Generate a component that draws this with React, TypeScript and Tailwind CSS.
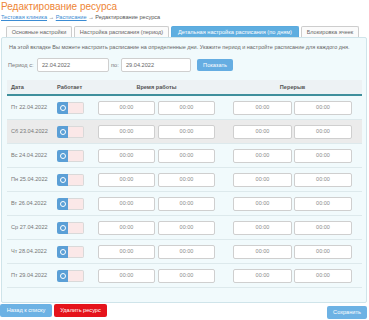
import React from "react";

const rows = [
  "Пт 22.04.2022",
  "Сб 23.04.2022",
  "Вс 24.04.2022",
  "Пн 25.04.2022",
  "Вт 26.04.2022",
  "Ср 27.04.2022",
  "Чт 28.04.2022",
  "Пт 29.04.2022",
];

function TimeInput({ w }: { w: string }) {
  return (
    <div
      className={`${w} h-[14px] bg-white border border-[#cfcfcf] rounded-[2px] flex items-center justify-center text-[5.5px] text-[#8a8a8a]`}
    >
      00:00
    </div>
  );
}

function Toggle() {
  return (
    <div className="flex h-[12px] w-[27px]">
      <div className="w-[11px] h-full bg-[#5b9fd6] rounded-l-[2px] flex items-center justify-center">
        <div className="w-[6px] h-[6px] rounded-full border border-white" />
      </div>
      <div className="flex-1 h-full bg-[#fbe8e8] border border-l-0 border-[#d9d9d9] rounded-r-[2px]" />
    </div>
  );
}

export default function App() {
  return (
    <div
      className="w-[369px] h-[320px] overflow-hidden bg-white relative"
      style={{ fontFamily: '"Liberation Sans", Arial, sans-serif' }}
    >
      <div className="pl-[1px] pt-[1px] text-[10px] leading-[12px] text-[#ee8536]">
        Редактирование ресурса
      </div>
      <div className="pl-[1px] mt-[1px] text-[5.6px] leading-[7px] text-[#555]">
        <span className="text-[#3a8bd3] underline">Тестовая клиника</span>
        <span> → </span>
        <span className="text-[#3a8bd3] underline">Расписание</span>
        <span> → Редактирование ресурса</span>
      </div>
      <div className="flex items-end ml-[6px] mt-[5px] gap-[2px] h-[11px]">
        <div className="h-[11px] w-[66px] border border-b-0 border-[#cdcdcd] bg-[#fbfbfb] rounded-t-[2px] text-[5.6px] text-[#666] flex items-center justify-center">
          Основные настройки
        </div>
        <div className="h-[11px] w-[95px] border border-b-0 border-[#cdcdcd] bg-[#fbfbfb] rounded-t-[2px] text-[5.6px] text-[#666] flex items-center justify-center">
          Настройка расписания (период)
        </div>
        <div className="h-[11px] w-[128px] border border-b-0 border-[#5aaade] bg-[#5faee0] rounded-t-[2px] text-[5.6px] text-white flex items-center justify-center">
          Детальная настройка расписания (по дням)
        </div>
        <div className="h-[11px] w-[58px] border border-b-0 border-[#cdcdcd] bg-[#fbfbfb] rounded-t-[2px] text-[5.6px] text-[#666] flex items-center justify-center">
          Блокировка ячеек
        </div>
      </div>
      <div className="ml-[1px] w-[366px] h-[266px] border border-[#cfe4ea] bg-[#f1fafc] rounded-[2px] px-[5px]">
        <div className="pt-[6px] pl-[2px] text-[5.5px] leading-[7px] text-[#666]">
          На этой вкладке Вы можете настроить расписание на определенные дни. Укажите период и настройте расписание для каждого дня.
        </div>
        <div className="flex items-center mt-[7px] h-[14px]">
          <span className="pl-[1px] text-[5.6px] text-[#777] w-[30px]">Период с:</span>
          <div className="w-[72px] h-[14px] bg-white border border-[#cfcfcf] rounded-[2px] flex items-center pl-[4px] text-[5.6px] text-[#666]">
            22.04.2022
          </div>
          <span className="ml-[2px] w-[10px] text-[5.6px] text-[#777]">по:</span>
          <div className="w-[70px] h-[14px] bg-white border border-[#cfcfcf] rounded-[2px] flex items-center pl-[4px] text-[5.6px] text-[#666]">
            29.04.2022
          </div>
          <div className="ml-[6px] w-[36px] h-[12px] bg-[#65ade2] rounded-[2px] flex items-center justify-center text-[5.6px] text-white">
            Показать
          </div>
        </div>
        <div className="mt-[8px] w-[355px]">
          <div className="flex items-center h-[16px] bg-[#edf2f4] border-b-2 border-[#3f8f9c] text-[5.6px] font-bold text-[#555]">
            <div className="w-[50px] pl-[4px]">Дата</div>
            <div className="w-[41px]">Работает</div>
            <div className="w-[117px] text-center">Время работы</div>
            <div className="w-[18px]" />
            <div className="w-[119px] text-center">Перерыв</div>
          </div>
          {rows.map((r, i) => (
            <div
              key={r}
              className={`flex items-center h-[24px] border-b border-[#dde9ec] ${i === 1 ? "bg-[#ebebeb]" : ""}`}
            >
              <div className="w-[50px] pl-[4px] text-[5.6px] text-[#777]">{r}</div>
              <div className="w-[41px]">
                <Toggle />
              </div>
              <div className="flex gap-[3px]">
                <TimeInput w="w-[57px]" />
                <TimeInput w="w-[57px]" />
              </div>
              <div className="w-[18px]" />
              <div className="flex gap-[2px]">
                <TimeInput w="w-[59px]" />
                <TimeInput w="w-[58px]" />
              </div>
            </div>
          ))}
        </div>
      </div>
      <div className="flex items-start mt-[1px]">
        <div className="w-[52px] h-[13px] bg-[#6db2e4] rounded-[2px] flex items-center justify-center text-[5.6px] text-white">
          Назад к списку
        </div>
        <div className="ml-[2px] w-[53px] h-[13px] bg-[#e5131b] rounded-[2px] flex items-center justify-center text-[5.6px] text-white">
          Удалить ресурс
        </div>
        <div className="ml-auto mr-[2px] mt-[2px] w-[40px] h-[13px] bg-[#6db2e4] rounded-[2px] flex items-center justify-center text-[5.6px] text-white">
          Сохранить
        </div>
      </div>
    </div>
  );
}
